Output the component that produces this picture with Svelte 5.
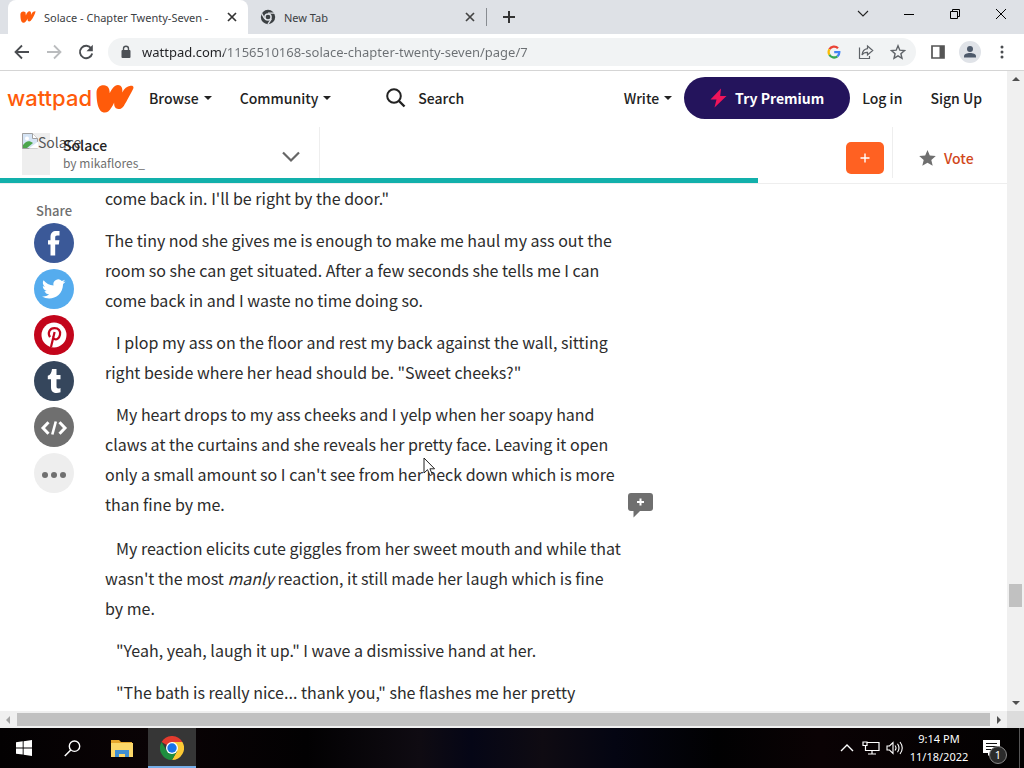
<script lang="ts">
    const progress = 75.3;
    let pageUrl = "wattpad.com/1156510168-solace-chapter-twenty-seven/page/7";
    let searchText = "";
</script>

<div class="desktop">
    <div class="tabs">
        <div class="tab active">
            <svg class="favicon" viewBox="0 0 38 29">
                <path fill="#ff5b0a" d="M1 8C1 2 8-1 13 3l1 8C16 4 21-1 25 2c2 2 1 6 1 8 2-5 5-9 11-9-1 6-6 17-12 23-4 3-8 0-7-6-3 6-6 11-11 10C2 27 1 17 1 8z" />
            </svg>
            <button class="tab-title">Solace - Chapter Twenty-Seven -</button>
            <button class="close" aria-label="Close tab">
                <svg width="10" height="10" viewBox="0 0 10 10"><path d="M1 1l8 8M9 1l-8 8" stroke="#333" stroke-width="1.7" /></svg>
            </button>
        </div>
        <div class="tab inactive">
            <svg class="favicon" viewBox="0 0 16 16">
                <circle cx="8" cy="8" r="7.2" fill="#3c4043" />
                <circle cx="8" cy="8" r="3.1" fill="#3c4043" stroke="#dee1e6" stroke-width="1.5" />
                <path d="M8 4.2h7M4.8 10L1.6 4.4M11.3 9.8L8 15.2" stroke="#dee1e6" stroke-width="1.3" />
            </svg>
            <button class="tab-title">New Tab</button>
            <button class="close" aria-label="Close tab">
                <svg width="10" height="10" viewBox="0 0 10 10"><path d="M1 1l8 8M9 1l-8 8" stroke="#444" stroke-width="1.7" /></svg>
            </button>
        </div>
        <button class="new-tab" aria-label="New tab">
            <svg width="12" height="12" viewBox="0 0 12 12"><path d="M6 0v12M0 6h12" stroke="#333" stroke-width="2" /></svg>
        </button>
        <div class="window-controls">
            <button aria-label="Search tabs"><svg width="12" height="12" viewBox="0 0 12 12"><path d="M1 3l5 5 5-5" fill="none" stroke="#222" stroke-width="1.1" /></svg></button>
            <button aria-label="Minimize"><svg width="12" height="12" viewBox="0 0 12 12"><path d="M1 6.5h10" stroke="#000" /></svg></button>
            <button aria-label="Restore"><svg width="12" height="12" viewBox="0 0 12 12"><path d="M1.500 3.500h7v7h-7zM3.500 3V1.500h7v7H9" fill="none" stroke="#000" /></svg></button>
            <button aria-label="Close"><svg width="12" height="12" viewBox="0 0 12 12"><path d="M1 1l10 10M11 1L1 11" stroke="#000" /></svg></button>
        </div>
    </div>

    <div class="toolbar">
        <button class="tool" aria-label="Back"><svg width="16" height="16" viewBox="0 0 16 16"><path d="M15 8H2M8 1.500L1.500 8 8 14.500" fill="none" stroke="#4a4d51" stroke-width="1.8" /></svg></button>
        <button class="tool" aria-label="Forward"><svg width="16" height="16" viewBox="0 0 16 16"><path d="M1 8h13M8 1.500L14.500 8 8 14.500" fill="none" stroke="#babcbe" stroke-width="1.8" /></svg></button>
        <button class="tool" aria-label="Reload"><svg width="16" height="16" viewBox="0 0 16 16"><path d="M13.300 4.500A6.200 6.200 0 1 0 14.200 9.500" fill="none" stroke="#4a4d51" stroke-width="1.9" /><path d="M14.800.8v6.400H8.500z" fill="#4a4d51" /></svg></button>
        <div class="omnibox">
            <svg width="12" height="14" viewBox="0 0 12 14"><rect x="1.500" y="5" width="9" height="8" rx="1" fill="#4d5156" /><path d="M3.500 6V3.700a2.500 2.500 0 0 1 5 0V6" fill="none" stroke="#4d5156" stroke-width="1.400" /></svg>
            <input class="url" aria-label="Address" bind:value={pageUrl} />
            <button class="tool" aria-label="Google">
                <svg width="14" height="14" viewBox="0 0 14 14" fill="none" stroke-width="2.300">
                    <path d="M11 3.200A5.400 5.400 0 0 0 2.400 4.300" stroke="#ea4335" />
                    <path d="M2.400 4.300a5.400 5.400 0 0 0 0 5.400" stroke="#fbbc05" />
                    <path d="M2.400 9.700a5.400 5.400 0 0 0 8 1.700" stroke="#34a853" />
                    <path d="M10.400 11.400A5.400 5.400 0 0 0 12.300 7.200H7.200" stroke="#4285f4" />
                </svg>
            </button>
            <button class="tool" aria-label="Share this page"><svg width="16" height="16" viewBox="0 0 16 16"><path d="M1.500 3.500v11h10V12M9.500 2l5.200 4.500-5.200 4.500V8.400C6.600 8.200 5 9.400 4 11c.4-3.600 2.300-6 5.500-6.400z" fill="none" stroke="#5f6368" stroke-width="1.200" /></svg></button>
            <button class="tool" aria-label="Bookmark"><svg width="16" height="16" viewBox="0 0 16 16"><path d="M8 1.800l1.800 4.400 4.700.4-3.600 3.100 1.100 4.600L8 11.800l-4 2.500 1.100-4.600L1.500 6.600l4.700-.4z" fill="none" stroke="#5f6368" stroke-width="1.400" /></svg></button>
        </div>
        <button class="tool" aria-label="Side panel"><svg width="14" height="14" viewBox="0 0 14 14"><path d="M1 1h12v12H1z" fill="none" stroke="#555" stroke-width="1.700" /><path d="M8.500 1H13v12H8.500z" fill="#555" /></svg></button>
        <button class="tool" aria-label="Profile"><svg width="22" height="22" viewBox="0 0 22 22"><circle cx="11" cy="11" r="11" fill="#e0e3e8" /><circle cx="11" cy="8" r="3" fill="#4e5a6b" /><path d="M5 16.500v-1.300c0-2 3-3.200 6-3.200s6 1.200 6 3.200v1.300z" fill="#4e5a6b" /></svg></button>
        <button class="tool" aria-label="Menu"><svg width="4" height="14" viewBox="0 0 4 14" fill="#4a4d51"><circle cx="2" cy="2" r="1.500" /><circle cx="2" cy="7" r="1.500" /><circle cx="2" cy="12" r="1.500" /></svg></button>
    </div>

    <div class="viewport">
        <div class="page">
            <nav class="nav">
                <a class="logo" href="#home">
                    <span>wattpad</span>
                    <svg width="38" height="29" viewBox="0 0 38 29"><path fill="#ff5b0a" d="M.5 9C.4 3.500 4 .9 8 1.200c4 .3 5.800 3 5.700 8C16 4.500 18.300.8 22 .9c3.600.1 4.700 3 4.300 7.500C28.200 4.500 31 2.200 34.500 1.800c2.600-.3 3.600 1 2.600 3.100-2.200 4.400-6 11.500-9.300 17-1.600 2.600-4 3.500-6.400 2.900-2.600-.7-3.500-3-3.200-6.200-1.700 3.700-3.600 7-6 8.800-2.400 1.600-5.800 1.400-7.900-1C1.300 22.700.6 15.500.5 9z" /></svg>
                </a>
                <button class="nav-item browse">Browse <i class="caret"></i></button>
                <button class="nav-item community">Community <i class="caret"></i></button>
                <label class="search">
                    <svg width="20" height="20" viewBox="0 0 20 20"><circle cx="8" cy="8" r="6.800" fill="none" stroke="#222" stroke-width="2" /><path d="M13 13l5.500 5.500" stroke="#222" stroke-width="2.400" /></svg>
                    <input type="text" placeholder="Search" aria-label="Search" bind:value={searchText} />
                </label>
                <button class="nav-item">Write <i class="caret"></i></button>
                <button class="premium">
                    <svg width="17" height="20" viewBox="0 0 17 20"><path d="M11 .5L.5 11.500h6L4.500 19.500 16.500 8h-6.300z" fill="#f0145a" /></svg>
                    Try Premium
                </button>
                <a class="nav-item login" href="#login">Log in</a>
                <a class="nav-item signup" href="#signup">Sign Up</a>
            </nav>

            <div class="story-bar">
                <button class="story-info">
                    <span class="cover">
                        <span class="alt">
                            <svg width="16" height="16" viewBox="0 0 16 16"><path d="M.5.5h10l5 5v10H.5z" fill="#d5e4f5" stroke="#a0a0a0" /><path d="M10.500.5v5h5" fill="#fff" stroke="#a0a0a0" /><path d="M1 15v-3c3-4 6-5 10-2l-6 5z" fill="#4ca64c" /><path d="M7 15.500l9-7v7z" fill="#fff" /><circle cx="5" cy="5.500" r="2" fill="#fff" /></svg>
                            Solace
                        </span>
                    </span>
                    <span class="names">
                        <strong>Solace</strong>
                        <small>by mikaflores_</small>
                    </span>
                    <svg class="chevron" width="20" height="12" viewBox="0 0 20 12"><path d="M2 1.500l8 8 8-8" fill="none" stroke="#666" stroke-width="2.200" /></svg>
                </button>
                <button class="add" aria-label="Add to library"><svg width="10" height="10" viewBox="0 0 10 10"><path d="M5 .5v9M.5 5h9" stroke="#fff" stroke-width="1.400" /></svg></button>
                <button class="vote">
                    <svg width="17" height="16" viewBox="0 0 17 16"><path d="M8.500 0l2.300 5.500 6 .5-4.500 3.900 1.400 5.900-5.200-3.100-5.200 3.100 1.400-5.900L.2 6l6-.5z" fill="#6f6f6f" /></svg>
                    Vote
                </button>
            </div>
            <div class="progress"><div style="width: {progress}%"></div></div>

            <main class="story">
                <aside class="share">
                    <span>Share</span>
                    <a href="#facebook" aria-label="Facebook"><svg viewBox="0 0 40 40"><circle cx="20" cy="20" r="20" fill="#3b5998" /><path d="M16.500 32.500V21.500H14v-4.300h2.500v-3.400c0-4 2.300-5.800 5.700-5.800h3.300v4.400h-2.300c-1.600 0-2 .7-2 2v2.800h4.200l-.6 4.300h-3.600v11z" fill="#fff" /></svg></a>
                    <a href="#twitter" aria-label="Twitter"><svg viewBox="0 0 40 40"><circle cx="20" cy="20" r="20" fill="#55acee" /><path d="M31.500 12.500c-.9.400-1.700.6-2.700.8 1-.6 1.600-1.500 2-2.600-.9.600-2 1-3 1.200a4.900 4.900 0 0 0-8.300 4.500c-4-.2-7.600-2.200-10-5.200-1.300 2.300-.6 5 1.500 6.500-.8 0-1.500-.2-2.200-.6 0 2.400 1.700 4.400 3.900 4.900-.7.200-1.500.2-2.200.1.600 2 2.400 3.300 4.600 3.400a9.700 9.700 0 0 1-7.100 2c7.800 4.800 20.600 1.100 21.100-12.500 1-.7 1.800-1.500 2.400-2.500z" fill="#fff" /></svg></a>
                    <a href="#pinterest" aria-label="Pinterest"><svg viewBox="0 0 40 40"><circle cx="20" cy="20" r="20" fill="#c3051b" /><circle cx="20" cy="20" r="12.500" fill="#fff" /><path d="M16 22.200c-2.800-4.400-.3-9 4.500-9 4 0 6.300 2.800 5.500 6.500-.7 3.500-3.400 5.400-5.600 4.300-1-.5-1.300-1.500-1.100-2.500M20.600 17L17 32" fill="none" stroke="#c3051b" stroke-width="2.200" /></svg></a>
                    <a href="#tumblr" aria-label="Tumblr"><svg viewBox="0 0 40 40"><circle cx="20" cy="20" r="20" fill="#35465c" /><path d="M18 8h4.500v6h4v4.300h-4v7c0 2.300 1.400 2.800 4 1.700V31.200c-4.800 1.900-9.500.5-9.500-4.700v-8.200h-3.200v-3.500c2.600-.8 3.800-3 4.200-6.800z" fill="#fff" /></svg></a>
                    <a href="#embed" aria-label="Embed"><svg viewBox="0 0 40 40"><circle cx="20" cy="20" r="20" fill="#6f6f6f" /><path d="M14.500 15.200L9 21l5.500 5.800M25.500 15.200L31 21l-5.500 5.800" fill="none" stroke="#fff" stroke-width="3" /><path d="M21.800 14.500l-3.500 13" stroke="#fff" stroke-width="2.600" /></svg></a>
                    <a href="#more" aria-label="More"><svg viewBox="0 0 40 40"><circle cx="20" cy="20" r="20" fill="#eee" /><g fill="#6f6f6f"><circle cx="11" cy="22" r="3" /><circle cx="20" cy="22" r="3" /><circle cx="29" cy="22" r="3" /></g></svg></a>
                </aside>
                <article>
                    <p>come back in. I'll be right by the door."</p>
                    <p>The tiny nod she gives me is enough to make me haul my ass out the room so she can get situated. After a few seconds she tells me I can come back in and I waste no time doing so.</p>
                    <p class="indent">I plop my ass on the floor and rest my back against the wall, sitting right beside where her head should be. "Sweet cheeks?"</p>
                    <p class="indent commented">
                        My heart drops to my ass cheeks and I yelp when her soapy hand claws at the curtains and she reveals her pretty face. Leaving it open only a small amount so I can't see from her neck down which is more than fine by me.
                        <button class="comment" aria-label="Comment"><svg width="25" height="25" viewBox="0 0 25 25"><path d="M3 0h19a3 3 0 0 1 3 3v12a3 3 0 0 1-3 3H12l-6.500 6.500V18H3a3 3 0 0 1-3-3V3a3 3 0 0 1 3-3z" fill="#6f6f6f" /><path d="M12.500 5.500v7M9 9h7" stroke="#fff" stroke-width="2" /></svg></button>
                    </p>
                    <p class="indent">My reaction elicits cute giggles from her sweet mouth and while that wasn't the most <em>manly</em> reaction, it still made her laugh which is fine by me.</p>
                    <p class="indent">"Yeah, yeah, laugh it up." I wave a dismissive hand at her.</p>
                    <p class="indent">"The bath is really nice... thank you," she flashes me her pretty</p>
                </article>
            </main>
        </div>
        <div class="vscroll">
            <i class="up"></i>
            <div class="thumb"></div>
            <i class="down"></i>
        </div>
        <div class="hscroll">
            <i class="left"></i>
            <div class="thumb"></div>
            <i class="right"></i>
        </div>
        <div class="corner"></div>
    </div>

    <div class="taskbar">
        <button class="task" aria-label="Start"><svg width="16" height="16" viewBox="0 0 16 16" fill="#fff"><path d="M0 2.300l6.700-1v6.200H0zM7.600 1.200L16 0v7.500H7.600zM0 8.400h6.700v6.200L0 13.700zM7.600 8.400H16V16l-8.400-1.200z" /></svg></button>
        <button class="task" aria-label="Search"><svg width="17" height="17" viewBox="0 0 17 17"><circle cx="10.500" cy="6.200" r="5.200" fill="none" stroke="#fff" stroke-width="1.400" /><path d="M6.800 10L.8 16" stroke="#fff" stroke-width="1.500" /></svg></button>
        <button class="task app" aria-label="File Explorer"><svg width="22" height="19" viewBox="0 0 22 19"><path d="M0 1h8l2 2h11v6H0z" fill="#e6a72e" /><path d="M0 4h22v14H0z" fill="#fbd769" /><path d="M4 18v-7h14v7h-4v-3H8v3z" fill="#3f8fd2" /></svg></button>
        <button class="task app running" aria-label="Chrome">
            <svg width="24" height="24" viewBox="0 0 24 24">
                <path d="M12 12L1.600 6A12 12 0 0 1 22.400 6z" fill="#e33b2e" />
                <path d="M12 12V6h10.400A12 12 0 0 1 12 24l5.200-9z" fill="#fcc934" />
                <path d="M12 12l5.200 3L12 24A12 12 0 0 1 1.600 6l5.200 9z" fill="#1e8e3e" />
                <circle cx="12" cy="12" r="6" fill="#fff" />
                <circle cx="12" cy="12" r="4.700" fill="#1a73e8" />
            </svg>
        </button>
        <div class="tray">
            <button aria-label="Hidden icons"><svg width="14" height="8" viewBox="0 0 14 8"><path d="M1 7l6-6 6 6" fill="none" stroke="#fff" stroke-width="1.400" /></svg></button>
            <button aria-label="Network"><svg width="18" height="14" viewBox="0 0 18 14"><path d="M5 1.500h12v8H3.500V5M10 9.500v3M6 13h8M1 1h4v3.500H1z" fill="none" stroke="#fff" stroke-width="1.200" /></svg></button>
            <button aria-label="Volume"><svg width="18" height="14" viewBox="0 0 18 14"><path d="M1 5h2.500L7 1.500v11L3.500 9H1zM9 4.500q2 2.500 0 5M11.500 2.800q3 4.200 0 8.400M14 1q4.500 6 0 12" fill="none" stroke="#fff" stroke-width="1.100" /></svg></button>
            <button class="clock"><span>9:14 PM</span><span>11/18/2022</span></button>
            <button class="notes" aria-label="Notifications">
                <svg width="17" height="16" viewBox="0 0 17 16"><path d="M0 0h17v13H8l-3 3v-3H0z" fill="#fff" /><path d="M3 3.500h11M3 6.500h11M3 9.500h7" stroke="#111" /></svg>
                <span class="badge">1</span>
            </button>
        </div>
    </div>

    <svg class="cursor" width="13" height="20" viewBox="0 0 13 20"><path d="M1 1v15l3.500-3.300L7 18.500l2.400-1-2.500-5.700h4.700z" fill="#fff" stroke="#222" /></svg>
</div>

<style>
    :global(body) {
        margin: 0;
    }
    .desktop {
        position: relative;
        display: flex;
        flex-direction: column;
        height: 100vh;
        overflow: hidden;
        font-family: "Noto Sans CJK SC", sans-serif;
        color: #222;
    }
    button,
    input {
        font: inherit;
        color: inherit;
        background: none;
        border: 0;
        padding: 0;
        margin: 0;
        outline: 0;
    }
    a {
        color: inherit;
        text-decoration: none;
    }
    button {
        display: flex;
        align-items: center;
        justify-content: center;
        white-space: nowrap;
    }
    svg {
        display: block;
        flex: none;
    }

    /* browser */
    .tabs {
        display: flex;
        height: 34px;
        padding-left: 8px;
        background: #dee1e6;
        font-family: "Noto Sans", sans-serif;
        font-size: 11px;
        color: #3c4043;
    }
    .tab {
        display: flex;
        align-items: center;
        width: 240px;
        box-sizing: border-box;
        padding: 0 8px 0 12px;
    }
    .tab.active {
        background: #fff;
        border-radius: 8px 8px 0 0;
    }
    .tab.inactive {
        width: 238px;
    }
    .favicon {
        width: 16px;
        height: 16px;
    }
    .tab-title {
        flex: 1;
        min-width: 0;
        justify-content: flex-start;
        margin-left: 8px;
        overflow: hidden;
    }
    .close {
        width: 16px;
        height: 16px;
    }
    .new-tab {
        width: 44px;
        margin: 8px 0;
        border-left: 1px solid #888c91;
    }
    .window-controls {
        display: flex;
        margin-left: auto;
    }
    .window-controls button {
        width: 46px;
        height: 28px;
    }
    .toolbar {
        display: flex;
        align-items: center;
        height: 36px;
        padding: 0 6px;
        background: #fff;
        border-bottom: 1px solid #d5d5d5;
    }
    .tool {
        width: 32px;
        height: 28px;
    }
    .omnibox {
        flex: 1;
        display: flex;
        align-items: center;
        height: 28px;
        margin: 0 6px;
        padding: 0 2px 0 12px;
        border-radius: 14px;
        background: #f1f3f4;
    }
    .url {
        flex: 1;
        min-width: 0;
        margin-left: 10px;
        font-family: "Open Sans", sans-serif;
        font-family: "Noto Sans", sans-serif;
        font-size: 13px;
        color: transparent;
        background: linear-gradient(90deg, #202124 82px, #6b6f73 82px);
        -webkit-background-clip: text;
        background-clip: text;
    }

    /* page */
    .viewport {
        flex: 1;
        min-height: 0;
        display: grid;
        grid-template: minmax(0, 1fr) 17px / minmax(0, 1fr) 17px;
        background: #f0f0f0;
    }
    .page {
        display: flex;
        flex-direction: column;
        overflow: hidden;
        background: #fff;
    }
    .nav {
        flex: none;
        display: flex;
        align-items: center;
        height: 54px;
        padding: 0 25px 2px 7px;
        font-size: 14px;
        font-weight: 500;
    }
    .logo {
        display: flex;
        align-items: center;
        gap: 4px;
        font-family: Inter, sans-serif;
        font-size: 22px;
        color: #ff5b0a;
    }
    .caret {
        margin-left: 5px;
        border: 4px solid transparent;
        border-top-color: #222;
        border-bottom: 0;
    }
    .browse {
        margin-left: 15px;
    }
    .community {
        margin-left: 28px;
    }
    .search {
        flex: 1;
        display: flex;
        align-items: center;
        gap: 12px;
        margin-left: 55px;
    }
    .search input {
        flex: 1;
        min-width: 0;
    }
    .search input::placeholder {
        color: #222;
        opacity: 1;
    }
    .premium {
        gap: 8px;
        width: 166px;
        height: 42px;
        margin-left: 12px;
        border-radius: 21px;
        background: #24145c;
        color: #fff;
        font-weight: 700;
    }
    .login {
        margin-left: 12px;
    }
    .signup {
        margin-left: 28px;
    }
    .story-bar {
        flex: none;
        display: flex;
        align-items: center;
        height: 51px;
    }
    .story-info {
        width: 320px;
        height: 51px;
        box-sizing: border-box;
        margin-right: auto;
        padding: 2px 18px 0 22px;
        border-right: 1px solid #eee;
        justify-content: flex-start;
    }
    .cover {
        position: relative;
        width: 28px;
        height: 42px;
        background: #eee;
    }
    .alt {
        position: absolute;
        top: 0;
        left: 0;
        display: flex;
        font-size: 14px;
        line-height: 18px;
        color: #555;
    }
    .names {
        flex: 1;
        margin-left: 13px;
        text-align: left;
    }
    .names strong,
    .names small {
        position: relative;
        display: block;
        line-height: 18px;
    }
    .names strong {
        font-size: 14px;
        font-weight: 500;
    }
    .names small {
        font-size: 12px;
        color: #6f6f6f;
    }
    .chevron {
        margin-top: 6px;
    }
    .add {
        width: 38px;
        height: 32px;
        margin: 10px 8px 0 0;
        border-radius: 5px;
        background: #ff6122;
    }
    .vote {
        justify-content: flex-start;
        gap: 8px;
        width: 115px;
        height: 51px;
        box-sizing: border-box;
        padding: 10px 0 0 26px;
        border-left: 1px solid #eee;
        font-size: 14px;
        font-weight: 500;
        color: #d1481c;
    }
    .progress {
        flex: none;
        height: 5px;
        border-bottom: 1px solid #eee;
    }
    .progress div {
        height: 5px;
        background: #12b0ab;
    }
    .story {
        flex: 1;
        min-height: 0;
        display: flex;
    }
    .share {
        display: flex;
        flex-direction: column;
        align-items: center;
        gap: 6px;
        width: 40px;
        padding: 17px 31px 0 34px;
        font-size: 13px;
        font-weight: 500;
        line-height: 20px;
        color: #6f6f6f;
    }
    .share span {
        margin-bottom: -4px;
    }
    .share a {
        width: 40px;
        height: 40px;
    }
    article {
        flex: 0 1 518px;
        margin-top: -1px;
        font-size: 16px;
        line-height: 30px;
        color: #2c2c2c;
    }
    p {
        margin: 0 0 12px;
    }
    .indent {
        text-indent: 11px;
    }
    .commented {
        position: relative;
        margin-bottom: 14px;
    }
    .comment {
        position: absolute;
        right: -30px;
        bottom: 1px;
    }

    /* scrollbars */
    .vscroll,
    .hscroll {
        display: flex;
        align-items: center;
        justify-content: space-between;
    }
    .vscroll {
        flex-direction: column;
        padding: 6px 0;
    }
    .hscroll {
        padding: 0 6px;
        gap: 7px;
    }
    .vscroll i,
    .hscroll i {
        border: 4px solid transparent;
    }
    .vscroll .up {
        border-top: 0;
        border-bottom-color: #505050;
    }
    .vscroll .down {
        border-bottom: 0;
        border-top-color: #505050;
    }
    .hscroll .left {
        border-left: 0;
        border-right-color: #a3a3a3;
    }
    .hscroll .right {
        border-right: 0;
        border-left-color: #505050;
    }
    .vscroll .thumb {
        width: 13px;
        height: 23px;
        margin-top: auto;
        margin-bottom: 94px;
        background: #c1c1c1;
    }
    .hscroll .thumb {
        flex: 1;
        height: 13px;
        background: #c1c1c1;
    }
    .corner {
        background: #dcdcdc;
    }

    /* taskbar */
    .taskbar {
        display: flex;
        height: 40px;
        background: linear-gradient(90deg, #030102 0%, #0a0305 15%, #020102 30%, #0f0b12 41%, #050616 46%, #0f0b12 53%, #040512 60%, #010102 70%, #0a0204 80%, #020101 100%);
        color: #fff;
        font-family: "Noto Sans", sans-serif;
    }
    .task {
        width: 48px;
        box-sizing: border-box;
    }
    .app {
        margin-left: 2px;
    }
    .running {
        background: #363636;
        border-top: 2px solid #363636;
        border-bottom: 2px solid #76aee8;
    }
    .tray {
        display: flex;
        margin-left: auto;
        margin-right: 4px;
        border-right: 1px solid #555;
    }
    .tray button {
        width: 24px;
    }
    .tray .clock {
        width: 64px;
        flex-direction: column;
        font-size: 11px;
        line-height: 18px;
    }
    .tray .notes {
        position: relative;
        width: 48px;
        padding-right: 8px;
        box-sizing: border-box;
    }
    .badge {
        position: absolute;
        right: 12px;
        bottom: 4px;
        width: 16px;
        height: 16px;
        border: 1px solid #888;
        border-radius: 50%;
        background: #2b2b2b;
        font-size: 11px;
        line-height: 16px;
    }
    .cursor {
        position: absolute;
        left: 423px;
        top: 457px;
    }
</style>
